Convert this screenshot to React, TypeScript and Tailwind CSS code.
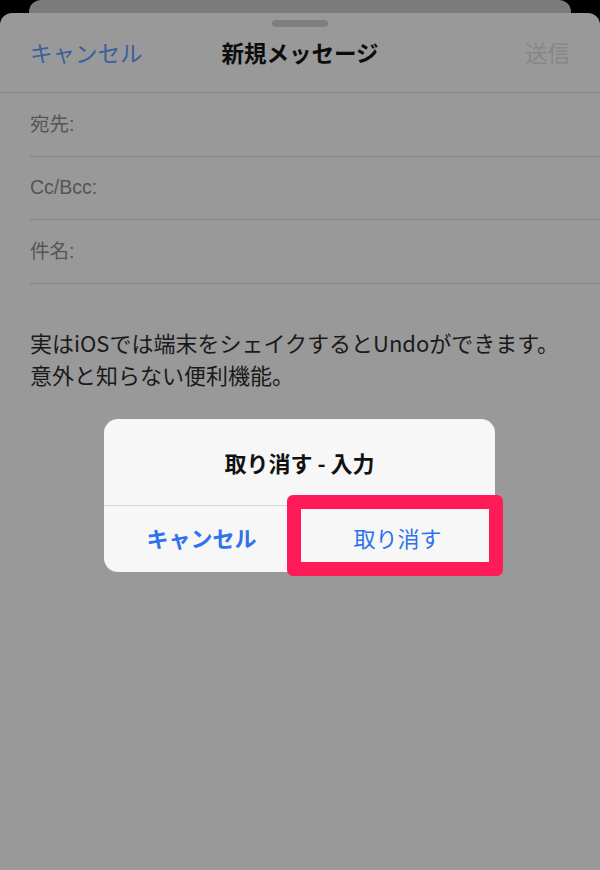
import React from 'react';

const font = { fontFamily: '"Noto Sans CJK JP", "Noto Sans", sans-serif' };
const labelFont = { fontFamily: '"Liberation Sans", "Noto Sans CJK JP", sans-serif' };

function FieldRow({ label, h }: { label: string; h: string }) {
    return (
        <div className={`ml-[30px] flex items-center border-b border-[#858585] ${h}`}>
            <span className="text-[19.5px] text-[#555555]" style={labelFont}>{label}</span>
        </div>
    );
}

export default function App() {
    return (
        <div className="h-[870px] w-[600px] bg-black flex flex-col overflow-hidden" style={font}>
            {/* card behind the sheet */}
            <div className="mx-[29px] h-[13px] bg-[#7b7b7b] rounded-t-[12px] shrink-0" />

            {/* compose sheet, dimmed */}
            <div className="relative flex-1 bg-[#999999] rounded-t-[12px]">
                <div className="flex justify-center pt-[7px]">
                    <div className="w-[56px] h-[7px] rounded-full bg-[#7f7f7f]" />
                </div>

                <div className="relative h-[66px] flex items-start justify-between px-[30px] pt-[9px] border-b border-[#858585]">
                    <span className="text-[22.5px] leading-[33px] text-[#3b5f9d]">キャンセル</span>
                    <span className="absolute left-1/2 -translate-x-1/2 text-[22.5px] leading-[33px] font-bold text-[#0c0c0c]">
                        新規メッセージ
                    </span>
                    <span className="text-[22.5px] leading-[33px] text-[#878787]">送信</span>
                </div>

                <FieldRow label="宛先:" h="h-[64px]" />
                <FieldRow label="Cc/Bcc:" h="h-[63px]" />
                <FieldRow label="件名:" h="h-[64px]" />

                <div className="px-[30px] pt-[42px] text-[22px] leading-[32px] text-[#1a1a1a]">
                    <p>実はiOSでは端末をシェイクするとUndoができます。</p>
                    <p>意外と知らない便利機能。</p>
                </div>

                {/* alert */}
                <div className="absolute left-[104px] top-[406px] w-[391px] rounded-[14px] bg-[#f7f7f7]">
                    <div className="h-[87px] flex items-center justify-center border-b border-[#d6d6d6]">
                        <span className="text-[22px] font-bold text-[#111111]">取り消す - 入力</span>
                    </div>
                    <div className="h-[66px] flex">
                        <div className="flex-1 flex items-center justify-center border-r border-[#d6d6d6] pb-[3px]">
                            <span className="text-[22px] font-bold text-[#2f72ec]">キャンセル</span>
                        </div>
                        <div className="flex-1 flex items-center justify-center pb-[3px]">
                            <span className="text-[22px] text-[#2f72ec]">取り消す</span>
                        </div>
                    </div>

                    {/* highlight frame */}
                    <div className="absolute left-[183px] top-[76px] w-[216px] h-[81px] border-[14px] border-[#ff1a58] rounded-[6px]" />
                </div>
            </div>
        </div>
    );
}
